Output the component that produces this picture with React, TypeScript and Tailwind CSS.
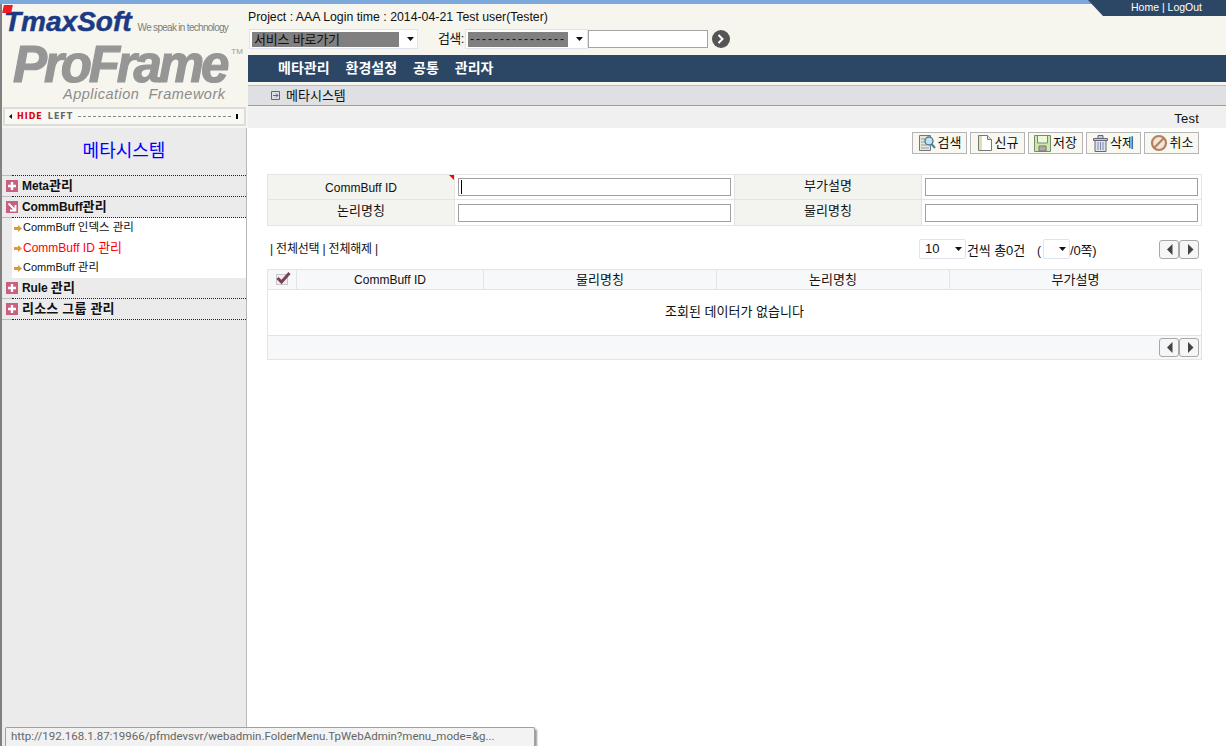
import type { ReactNode } from 'react';

const TOOL_BUTTONS = [
  { label: '검색', icon: 'search' },
  { label: '신규', icon: 'new' },
  { label: '저장', icon: 'save' },
  { label: '삭제', icon: 'delete' },
  { label: '취소', icon: 'cancel' },
];

const NAV_ITEMS = ['메타관리', '환경설정', '공통', '관리자'];

const ToolIcon = ({ name }: { name: string }) => {
  if (name === 'search') {
    return (
      <svg width="18" height="18" viewBox="0 0 18 18">
        <path d="M1.5 1.5h11v15h-11z" fill="#e6e6de" stroke="#777" />
        <path d="M3 5h5M3 8h4M3 11h6M3 14h8" stroke="#999" />
        <circle cx="11" cy="7" r="4" fill="#bfe3f2" stroke="#4c7f99" strokeWidth="1.4" />
        <path d="M13.5 10l3.5 4" stroke="#4c7f99" strokeWidth="2" />
      </svg>
    );
  }
  if (name === 'new') {
    return (
      <svg width="16" height="18" viewBox="0 0 16 18">
        <path d="M1.5 1.5h9l4 4v11h-13z" fill="#fff" stroke="#777" />
        <path d="M2 2h3v14H2z" fill="#d9e4a8" />
        <path d="M10.5 1.5v4h4" fill="#ddd" stroke="#777" />
      </svg>
    );
  }
  if (name === 'save') {
    return (
      <svg width="17" height="18" viewBox="0 0 17 18">
        <path d="M.5 1.5h16v16H.5z" fill="#cfe8a8" stroke="#6f8f6f" />
        <path d="M3.5 2v7h10V2" fill="#eef6de" stroke="#6f8f6f" />
        <path d="M5 17v-5h7v5z" fill="#aaa" stroke="#777" />
      </svg>
    );
  }
  if (name === 'delete') {
    return (
      <svg width="15" height="18" viewBox="0 0 15 18">
        <path d="M.5 4.5h14v2H.5zM5 4V1.500h5V4" fill="#c8ccd8" stroke="#667" />
        <path d="M2 6.500h11v11H2z" fill="#dfe3ee" stroke="#667" />
        <path d="M5 8v8M7.500 8v8M10 8v8" stroke="#7c86a8" />
      </svg>
    );
  }
  return (
    <svg width="18" height="18" viewBox="0 0 18 18">
      <circle cx="9" cy="9" r="7" fill="#efe6da" stroke="#b5805f" strokeWidth="2.200" />
      <path d="M4.500 13.500l9-9" stroke="#b5805f" strokeWidth="2.200" />
    </svg>
  );
};

const Caret = () => (
  <svg width="7" height="4" viewBox="0 0 7 4" className="shrink-0">
    <path d="M0 0h7L3.500 4z" fill="#111" />
  </svg>
);

const Pager = () => (
  <div className="flex">
    {['M7.500 4v11L2 9.500z', 'M3 4v11l5.500-5.500z'].map(path => (
      <div
        key={path}
        className="flex h-[19px] w-[20px] items-center justify-center rounded-[3px] border border-[#a8a8a8] bg-[#f6f6f6]"
      >
        <svg width="11" height="19" viewBox="0 0 11 19">
          <path d={path} fill="#444" transform="translate(1 0)" />
        </svg>
      </div>
    ))}
  </div>
);

const TreeSeparator = () => (
  <div className="flex h-px w-full">
    <div className="h-px w-[10px] bg-[#bdbdbd]" />
    <div className="flex-1 border-t border-dotted border-[#222]" />
  </div>
);

const TreeRow = ({ latin, hangul, open }: { latin?: string; hangul: string; open?: boolean }) => (
  <div className="flex h-[20px] items-center gap-[4px] pl-[4px] text-[12px] font-bold tracking-[-0.1px] text-[#111]">
    <svg width="12" height="12" viewBox="0 0 12 12" className="shrink-0">
      <rect width="12" height="12" fill="#c9607e" />
      {open ? (
        <path d="M2.500 2.500l6 6M9.500 4v5.500H4" stroke="#fff" strokeWidth="1.800" fill="none" />
      ) : (
        <path d="M6 2v8M2 6h8" stroke="#fff" strokeWidth="2.400" />
      )}
    </svg>
    <span className="whitespace-pre">
      {latin}
      <span className="text-[13px] tracking-[0.2px]">{hangul}</span>
    </span>
  </div>
);

const SubRow = ({ children, className }: { children: ReactNode; className: string }) => (
  <div className={`flex h-[20px] items-center gap-[1px] pl-[2px] ${className}`}>
    <svg width="8" height="7" viewBox="0 0 8 7" className="shrink-0">
      <path d="M0 2h4V0l4 3.500L4 7V5H0z" fill="#e09a37" />
    </svg>
    <span>{children}</span>
  </div>
);

const Label = ({ children, w, flag }: { children: ReactNode; w: string; flag?: boolean }) => (
  <div className={`relative flex items-center justify-center border-r border-[#e4e4e4] bg-[#f3f3ef] pb-[3px] ${w}`}>
    {children}
    {flag && <span className="absolute top-0 right-0 h-0 w-0 border-t-[5px] border-l-[5px] border-t-[#ff0000] border-l-transparent" />}
  </div>
);

const FieldCell = ({ w, last, cursor }: { w: string; last?: boolean; cursor?: boolean }) => (
  <div className={`flex items-center justify-center ${w} ${last ? '' : 'border-r border-[#e4e4e4]'}`}>
    <div className="flex h-[18px] w-[calc(100%-6px)] items-center border border-[#a0a0a0] bg-white pl-[2px]">
      {cursor && <span className="h-[14px] w-px bg-black" />}
    </div>
  </div>
);

const App = () => {
  return (
    <div className="relative flex h-[746px] w-[1226px] overflow-hidden bg-white font-['Liberation_Sans','Noto_Sans_CJK_KR',sans-serif] text-[12px] text-[#111]">
      {/* top strip */}
      <div className="absolute top-0 left-0 h-[4px] w-full bg-[#7ba7da]" />
      <div className="absolute top-0 right-0 flex h-[16px] w-[138px] text-[10.5px] text-white">
        <svg width="15" height="16" viewBox="0 0 15 16" className="shrink-0">
          <path d="M0 0h15v16z" fill="#2c4666" />
        </svg>
        <div className="flex flex-1 items-center justify-end bg-[#2c4666] pr-[24px]">Home | LogOut</div>
      </div>

      {/* left column */}
      <div className="flex w-[248px] shrink-0 flex-col border-l-2 border-[#808080]">
        <div className="h-[105px] bg-[#f6f5ee] pt-[4px]">
          <div className="relative flex items-baseline pt-[2px] pl-[2px]">
            <span className="absolute top-[1px] left-[1px] h-[8px] w-[9px] -skew-x-12 bg-[#ee1c25]" />
            <span className="text-[28px] leading-[32px] font-bold text-[#1c3a84] italic [-webkit-text-stroke:0.5px_#1c3a84]">
              TmaxSoft
            </span>
            <span className="ml-[6px] text-[10px] tracking-[-0.7px] text-[#7d7d7d]">We speak in technology</span>
          </div>
          <div className="mt-[2px] flex items-start pl-[11px]">
            <span className="text-[51px] leading-[50px] font-bold tracking-[-3.100px] text-[#969696] italic [-webkit-text-stroke:1.200px_#969696]">
              ProFrame
            </span>
            <span className="mt-[8px] ml-[5px] text-[8px] leading-[8px] text-[#999]">TM</span>
          </div>
          <div className="mt-[-4px] pl-[61px] text-[14.500px] leading-[16px] tracking-[0.5px] text-[#8c8c8c] italic">
            Application&nbsp; Framework
          </div>
        </div>

        <div className="flex h-[23px] items-center bg-[#f6f5ee] pr-[2px] pl-[1px]">
          <div className="flex h-[19px] w-full items-center gap-[5px] border-2 border-[#dcdcdc] bg-[#f8f8f4] pr-[6px] pl-[4px] font-['DejaVu_Sans',sans-serif] text-[8px] font-bold tracking-[1px]">
            <svg width="3" height="5" viewBox="0 0 3 5" className="shrink-0">
              <path d="M3 0v5L0 2.500z" fill="#111" />
            </svg>
            <span className="text-[#e00000]">HIDE</span>
            <span className="text-[#666]">LEFT</span>
            <div className="flex-1 border-t border-dashed border-[#888]" />
            <span className="h-[5px] w-[2px] bg-black" />
          </div>
        </div>

        <div className="mr-px flex flex-1 flex-col border-r border-[#b8b8b8] bg-[#ebebeb]">
          <div className="flex h-[47px] items-center justify-center text-[18px] text-[#0000ff]">메타시스템</div>
          <TreeSeparator />
          <TreeRow latin="Meta" hangul="관리" />
          <TreeSeparator />
          <TreeRow latin="CommBuff" hangul="관리" open />
          <TreeSeparator />
          <div className="ml-[10px] flex flex-col bg-white">
            <SubRow className="text-[11px]">
              CommBuff <span className="text-[11.500px]">인덱스 관리</span>
            </SubRow>
            <SubRow className="text-[12px] text-[#ff0000]">
              CommBuff ID <span className="text-[13px]">관리</span>
            </SubRow>
            <SubRow className="text-[11px]">
              CommBuff <span className="text-[11.500px]">관리</span>
            </SubRow>
          </div>
          <TreeRow latin="Rule " hangul="관리" />
          <TreeSeparator />
          <TreeRow hangul="리소스 그룹 관리" />
          <TreeSeparator />
        </div>
      </div>

      {/* right column */}
      <div className="flex flex-1 flex-col">
        <div className="h-[55px] bg-[#f6f5ee] pt-[10px]">
          <div className="h-[15px] text-[12.300px] leading-[15px]">Project : AAA Login time : 2014-04-21 Test user(Tester)</div>
          <div className="mt-[4px] flex h-[20px] items-center pl-px">
            <div className="flex h-[20px] w-[169px] items-center border border-[#dfe3ee] bg-white pl-[2px]">
              <div className="flex h-[15px] w-[147px] items-center bg-[#808080] pl-[2px] text-[13px] leading-[15px] tracking-[-0.2px]">
                서비스 바로가기
              </div>
              <div className="ml-[8px]"><Caret /></div>
            </div>
            <span className="ml-[20px] w-[27px] text-[13px] tracking-[-0.6px] whitespace-nowrap">검색:</span>
            <div className="flex h-[20px] w-[123px] items-center border border-[#dfe3ee] bg-white pl-[2px]">
              <div className="flex h-[15px] w-[100px] items-center overflow-hidden bg-[#808080] pl-[2px] text-[12px] leading-[15px] tracking-[2px] whitespace-nowrap">
                ----------------
              </div>
              <div className="ml-[8px]"><Caret /></div>
            </div>
            <div className="h-[18px] w-[120px] border border-[#a5a5a5] bg-white" />
            <div className="ml-[4px] flex h-[18px] w-[18px] items-center justify-center rounded-full bg-[#555]">
              <svg width="8" height="10" viewBox="0 0 8 10">
                <path d="M1.500 1l4 4-4 4" stroke="#fff" strokeWidth="2" fill="none" />
              </svg>
            </div>
          </div>
        </div>

        <nav className="flex h-[27px] items-center bg-[#2c4666] pl-[30px] text-[14px] font-bold text-white">
          {NAV_ITEMS.map(item => (
            <span key={item} className="mr-[16px]">
              {item}
            </span>
          ))}
        </nav>

        <div className="h-[3px] bg-[#f6f5ee]" />
        <div className="flex h-[21px] items-center gap-[6px] border-t border-b border-t-[#bcbcbc] border-b-[#999] bg-[#dfe0e4] pl-[23px] text-[13px]">
          <svg width="9" height="9" viewBox="0 0 9 9" className="shrink-0">
            <path d="M.5.500h8v8h-8z" fill="none" stroke="#666" />
            <path d="M2 4.500h5M5 2.500l2 2-2 2" fill="none" stroke="#666" />
          </svg>
          메타시스템
        </div>
        <div className="flex h-[22px] items-center justify-end border-t border-[#f6f5ee] bg-[#f0f0f0] pt-[3px] pr-[27px] text-[13px] tracking-[0.2px]">Test</div>

        {/* toolbar */}
        <div className="mt-[4px] flex justify-end gap-[3px] pr-[27px]">
          {TOOL_BUTTONS.map(button => (
            <button
              key={button.label}
              type="button"
              className="flex h-[22px] w-[55px] items-center justify-center gap-[2px] border border-[#b5b5b5] bg-[#f8f8f0] text-[13px]"
            >
              <ToolIcon name={button.icon} />
              <span>{button.label}</span>
            </button>
          ))}
        </div>

        {/* search form */}
        <div className="mt-[20px] ml-[19px] w-[935px] border border-[#e4e4e4] text-[13px]">
          <div className="flex h-[25px] border-b border-[#e4e4e4]">
            <Label w="w-[187px]" flag><span className="pt-[5px] text-[12px]">CommBuff ID</span></Label>
            <FieldCell w="w-[280px]" cursor />
            <Label w="w-[187px]">부가설명</Label>
            <FieldCell w="flex-1" last />
          </div>
          <div className="flex h-[25px]">
            <Label w="w-[187px]">논리명칭</Label>
            <FieldCell w="w-[280px]" />
            <Label w="w-[187px]">물리명칭</Label>
            <FieldCell w="flex-1" last />
          </div>
        </div>

        {/* list options */}
        <div className="mt-[13px] ml-[22px] flex h-[20px] items-center pr-[27px]">
          <span className="w-[109px] tracking-[-0.2px] whitespace-nowrap">| 전체선택 | 전체해제 |</span>
          <div className="ml-[540px] flex h-[20px] w-[47px] items-center justify-between rounded-[2px] border border-[#dfe3ee] pr-[3px] pl-[5px] text-[13px]">
            10
            <Caret />
          </div>
          <span className="ml-px w-[70px] pt-[3px] text-[13px] tracking-[-0.1px]">건씩 총0건</span>
          <span className="w-[6px] pt-[3px]">(</span>
          <div className="flex h-[20px] w-[27px] items-center justify-end rounded-[2px] border border-[#dfe3ee] pr-[3px]">
            <Caret />
          </div>
          <span className="pt-[3px] text-[13px] tracking-[-0.2px]">/0쪽)</span>
          <div className="ml-auto">
            <Pager />
          </div>
        </div>

        {/* list */}
        <div className="mt-[10px] ml-[19px] w-[935px] border border-[#e4e4e4] text-[13px]">
          <div className="flex h-[20px] border-b border-[#e4e4e4] bg-[#f7f8fa] text-center leading-[19px]">
            <div className="flex w-[29px] items-center justify-center border-r border-[#e4e4e4]">
              <div className="relative h-[11px] w-[12px] border border-[#c8c8c8] bg-[#eee]">
                <svg width="15" height="12" viewBox="0 0 15 12" className="absolute top-[-3px] left-[-1px]">
                  <path d="M1.500 6l4 4 8-9" stroke="#7b3f5d" strokeWidth="3" fill="none" />
                </svg>
              </div>
            </div>
            <div className="w-[187px] border-r border-[#e4e4e4] pt-px text-[12px]">CommBuff ID</div>
            <div className="w-[233px] border-r border-[#e4e4e4]">물리명칭</div>
            <div className="w-[233px] border-r border-[#e4e4e4]">논리명칭</div>
            <div className="flex-1">부가설명</div>
          </div>
          <div className="flex h-[46px] items-center justify-center border-b border-[#e4e4e4] pb-[2px]">조회된 데이터가 없습니다</div>
          <div className="flex h-[23px] items-center justify-end bg-[#f7f8fa] pr-[2px]">
            <Pager />
          </div>
        </div>
      </div>

      {/* status tooltip */}
      <div className="absolute bottom-0 left-[5px] flex h-[19px] w-[530px] items-center rounded-t-[2px] border border-b-0 border-[#a0a0a0] bg-[#f2f2f2]/90 pl-[5px] font-['Roboto',sans-serif] text-[11.500px] whitespace-nowrap text-[#666] shadow-[2px_2px_2px_rgba(0,0,0,0.4)]">
        http://192.168.1.87:19966/pfmdevsvr/webadmin.FolderMenu.TpWebAdmin?menu_mode=&amp;g...
      </div>
    </div>
  );
};

export default App;
